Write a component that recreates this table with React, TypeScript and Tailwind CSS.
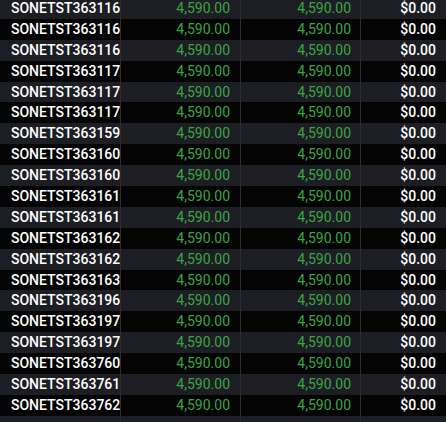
const ids = [
  '3631163', '3631165', '3631168', '3631170', '3631174', '3631179',
  '3631592', '3631601', '3631606', '3631615', '3631619', '3631624',
  '3631627', '3631633', '3631962', '3631975', '3631979', '3637607',
  '3637613', '3637629',
];

const rows = ids.map((n) => ({ order: `SONETST${n}`, amount: '4,590.00', paid: '4,590.00', due: '$0.00' }));

export default function App() {
  return (
    <div
      className="w-[446px] h-[422px] overflow-hidden bg-[#1d1e23] flex flex-col text-[14px]"
      style={{ fontFamily: 'Roboto, "Liberation Sans", sans-serif' }}
    >
      <div className="-mt-[2px]">
        {rows.map((r, i) => (
          <div
            key={r.order}
            className={`grid grid-cols-[121px_120px_120px_1fr] h-[20.9px] items-stretch ${
              i % 2 === 0 ? 'bg-[#1d1e23]' : 'bg-[#040404]'
            }`}
          >
            <div className="border-r border-[#2c2d32] pl-[11px] overflow-hidden whitespace-nowrap font-medium text-white leading-[21px]">
              {r.order}
            </div>
            <div className="border-r border-[#2c2d32] pr-[10px] text-right text-[#3aa544] leading-[21px]">{r.amount}</div>
            <div className="border-r border-[#2c2d32] pr-[9px] text-right text-[#3aa544] leading-[21px]">{r.paid}</div>
            <div className="pr-[10px] text-right font-medium text-white leading-[21px]">{r.due}</div>
          </div>
        ))}
      </div>
      <div className="flex-1 grid grid-cols-[121px_120px_120px_1fr]">
        <div className="border-r border-[#2c2d32]" />
        <div className="border-r border-[#2c2d32]" />
        <div className="border-r border-[#2c2d32]" />
        <div />
      </div>
    </div>
  );
}
